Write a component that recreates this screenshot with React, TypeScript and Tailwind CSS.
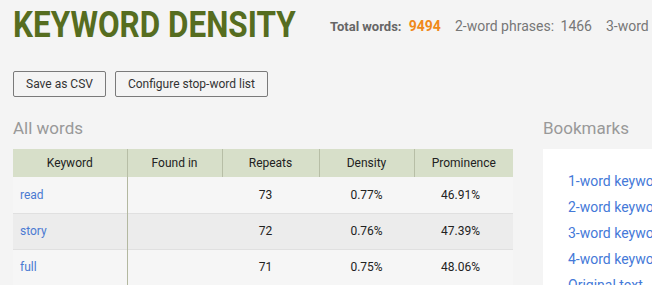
const rows = [
  { word: "read", repeats: 73, density: "0.77%", prominence: "46.91%" },
  { word: "story", repeats: 72, density: "0.76%", prominence: "47.39%" },
  { word: "full", repeats: 71, density: "0.75%", prominence: "48.06%" },
];

const bookmarks = [
  "1-word keywords",
  "2-word keywords",
  "3-word keywords",
  "4-word keywords",
  "Original text",
];

export default function App() {
  return (
    <div className="h-[285px] w-[652px] overflow-hidden bg-[#f4f4f4] font-['Roboto',sans-serif] whitespace-nowrap">
      {/* header */}
      <div className="flex pt-[6px] pl-[13px]">
        <div className="w-[317px] shrink-0">
          <h1 className="inline-block origin-left scale-x-[0.85] text-[37px] leading-none font-bold text-[#566d20]">
            KEYWORD DENSITY
          </h1>
        </div>
        <div className="flex shrink-0 items-baseline pt-[13px] text-[14px] leading-none text-[#777]">
          <span className="text-[13px] font-bold text-[#666]">
            Total words: <span className="ml-[4px] text-[14px] text-[#f0891a]">9494</span>
          </span>
          <span className="ml-[14px]">
            2-word phrases: <span className="ml-[3px]">1466</span>
          </span>
          <span className="ml-[14px]">
            3-word phrases: <span className="ml-[3px]">412</span>
          </span>
        </div>
      </div>

      <div className="mt-[27px] flex gap-[9px] pl-[13px]">
        <button className="h-[26px] rounded-[2px] border border-[#7a7a7a] px-[12px] text-[12px] text-[#333]">
          Save as CSV
        </button>
        <button className="h-[26px] rounded-[2px] border border-[#7a7a7a] px-[12px] text-[12px] text-[#333]">
          Configure stop-word list
        </button>
      </div>

      <div className="mt-[22px] flex pl-[13px]">
        <div className="w-[500px] shrink-0">
          <h2 className="h-[30px] text-[17px] leading-[18px] text-[#999]">All words</h2>
          <table className="w-[500px] table-fixed border-collapse text-[12px] text-[#222]">
            <colgroup>
              <col className="w-[114px]" />
              <col className="w-[95px]" />
              <col className="w-[97px]" />
              <col className="w-[95px]" />
              <col className="w-[99px]" />
            </colgroup>
            <thead>
              <tr className="h-[28px] bg-[#d7dfc9]">
                <th className="border-r border-[#b7bea6] font-normal">Keyword</th>
                <th className="border-r border-[#b7bea6] font-normal">Found in</th>
                <th className="border-r border-[#b7bea6] font-normal">Repeats</th>
                <th className="border-r border-[#b7bea6] font-normal">Density</th>
                <th className="font-normal">Prominence</th>
              </tr>
            </thead>
            <tbody>
              {rows.map((r, i) => (
                <tr
                  key={r.word}
                  className={`h-[36px] border-b border-[#e0e0e0] ${i % 2 === 1 ? "bg-[#ececec]" : "bg-[#f6f6f6]"}`}
                >
                  <td className="border-r border-[#b3b8a0] pl-[7px] text-[#4b7ad2]">{r.word}</td>
                  <td></td>
                  <td className="pr-[10px] text-center">{r.repeats}</td>
                  <td className="text-center">{r.density}</td>
                  <td className="pr-[6px] text-center">{r.prominence}</td>
                </tr>
              ))}
            </tbody>
          </table>
        </div>

        <div className="ml-[30px] shrink-0">
          <h2 className="h-[30px] text-[17px] leading-[18px] text-[#999]">Bookmarks</h2>
          <div className="w-[200px] bg-white pt-[19px] pl-[25px]">
            {bookmarks.map((b) => (
              <div key={b} className="text-[14px] leading-[26px] text-[#4479d8]">
                {b}
              </div>
            ))}
          </div>
        </div>
      </div>
    </div>
  );
}
